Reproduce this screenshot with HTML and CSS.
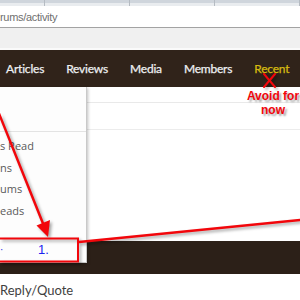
FILE: index.html
```html
<!DOCTYPE html>
<html>
<head>
<meta charset="utf-8">
<link rel="stylesheet" href="styles.css">
</head>
<body>
<div class="screen">
  <div class="tabs">
    <span class="tab"></span><span class="tab"></span><span class="tab"></span><span class="tab"></span>
  </div>
  <div class="address">rums/activity</div>
  <div class="toolbar"></div>
  <nav class="nav">
    <a class="nav-item">Articles</a>
    <a class="nav-item">Reviews</a>
    <a class="nav-item">Media</a>
    <a class="nav-item">Members</a>
    <a class="nav-item recent">Recent</a>
  </nav>
  <div class="page">
    <div class="subbar"></div>
    <div class="row"></div>
    <div class="spacer"></div>
    <div class="darkband"></div>
    <div class="reply">Reply/Quote</div>
  </div>

  <div class="dropdown">
    <div class="dd-head"></div>
    <ul class="dd-list">
      <li>s Read</li>
      <li>ns</li>
      <li>ums</li>
      <li>eads</li>
    </ul>
    <div class="dd-foot"><span class="dash">·</span><span class="num">1.</span></div>
  </div>

  <svg class="marks" width="300" height="300" viewBox="0 0 300 300">
    <g fill="none" stroke="#f2060b" stroke-width="2.5" stroke-linecap="round">
      <line x1="-12" y1="86" x2="44" y2="226"/>
      <rect x="-6" y="238.5" width="84" height="23" stroke-width="2"/>
      <line x1="79" y1="242" x2="304" y2="219.5"/>
      <line x1="264" y1="74" x2="275" y2="87" stroke-width="2"/>
      <line x1="275" y1="74" x2="264" y2="87" stroke-width="2"/>
    </g>
    <polygon points="48,237 36.5,225.5 50,220" fill="#f2060b"/>
  </svg>
  <div class="note">Avoid for<br>now</div>
</div>
</body>
</html>
```
FILE: styles.css
```css
* { box-sizing: border-box; }
html, body { margin: 0; padding: 0; }
body { width: 300px; height: 300px; overflow: hidden; background: #fff; }
.screen { position: relative; width: 300px; height: 300px; overflow: hidden; }

.tabs {
  height: 6px;
  display: flex;
  background: linear-gradient(#cfd5dc 0, #cfd5dc 3px, #e9ecef 3px, #e9ecef 6px);
}
.tab { width: 90px; border-right: 1px solid #b5bbc2; }
.tab:first-child { width: 48px; }

.address {
  height: 22px;
  border-bottom: 1px solid #a3a3a3;
  background: #fff;
  font-family: "Liberation Sans", sans-serif;
  font-size: 11px;
  letter-spacing: -0.3px;
  line-height: 22px;
  color: #6f6f6f;
}

.toolbar {
  height: 22px;
  background: #f0f0f0;
  border-bottom: 2px solid #fafafa;
}

.nav {
  height: 37px;
  background: #30231a;
  display: flex;
  align-items: center;
  gap: 22px;
  padding-left: 6px;
  padding-bottom: 1px;
  font-family: Lato, sans-serif;
  font-size: 12px;
  letter-spacing: -0.2px;
  font-weight: 400;
  -webkit-text-stroke: 0.25px currentColor;
}
.nav-item { color: #eef0f2; text-decoration: none; }
.nav-item.recent { color: #d6bb10; }

.page { background: #fff; }
.subbar { height: 16px; border-bottom: 1px solid #e9e9e9; }
.row { height: 27px; border-bottom: 1px solid #ececec; }
.spacer { height: 111px; }
.darkband { height: 33px; background: #2c2018; }
.reply {
  padding-top: 8px;
  font-family: Lato, sans-serif;
  font-size: 13px;
  color: #3f3f3f;
}

.dropdown {
  position: absolute;
  left: 0;
  top: 87px;
  width: 87px;
  height: 176px;
  background: #fdfdfd;
  border-right: 1px solid #c9c9c9;
  border-bottom: 1px solid #c9c9c9;
  box-shadow: 1px 1px 3px rgba(0, 0, 0, 0.25);
  font-family: "Open Sans", "Noto Sans", sans-serif;
  font-size: 11px;
  color: #5a5a5a;
}
.dd-head { height: 45px; border-bottom: 1px solid #e3e3e3; }
.dd-list { list-style: none; margin: 0; padding: 3px 0 0 0; }
.dd-list li { height: 21.5px; line-height: 21.5px; }
.dd-foot {
  margin-top: 16px;
  height: 24px;
  display: flex;
  align-items: center;
  font-family: "Liberation Sans", sans-serif;
  font-size: 13px;
  font-weight: 400;
  color: #2329e8;
}
.dash { width: 38px; font-size: 10px; }
.num { color: #1b22f0; }

.marks {
  position: absolute;
  left: 0;
  top: 0;
  filter: drop-shadow(2px 2px 1.5px rgba(0, 0, 0, 0.35));
  pointer-events: none;
}
.note {
  position: absolute;
  left: 240px;
  top: 89px;
  width: 66px;
  text-align: center;
  font-family: "Liberation Sans", sans-serif;
  font-weight: 700;
  font-size: 12px;
  line-height: 14px;
  color: #f2060b;
  text-shadow: 2px 2px 2px rgba(0, 0, 0, 0.35);
}
```
